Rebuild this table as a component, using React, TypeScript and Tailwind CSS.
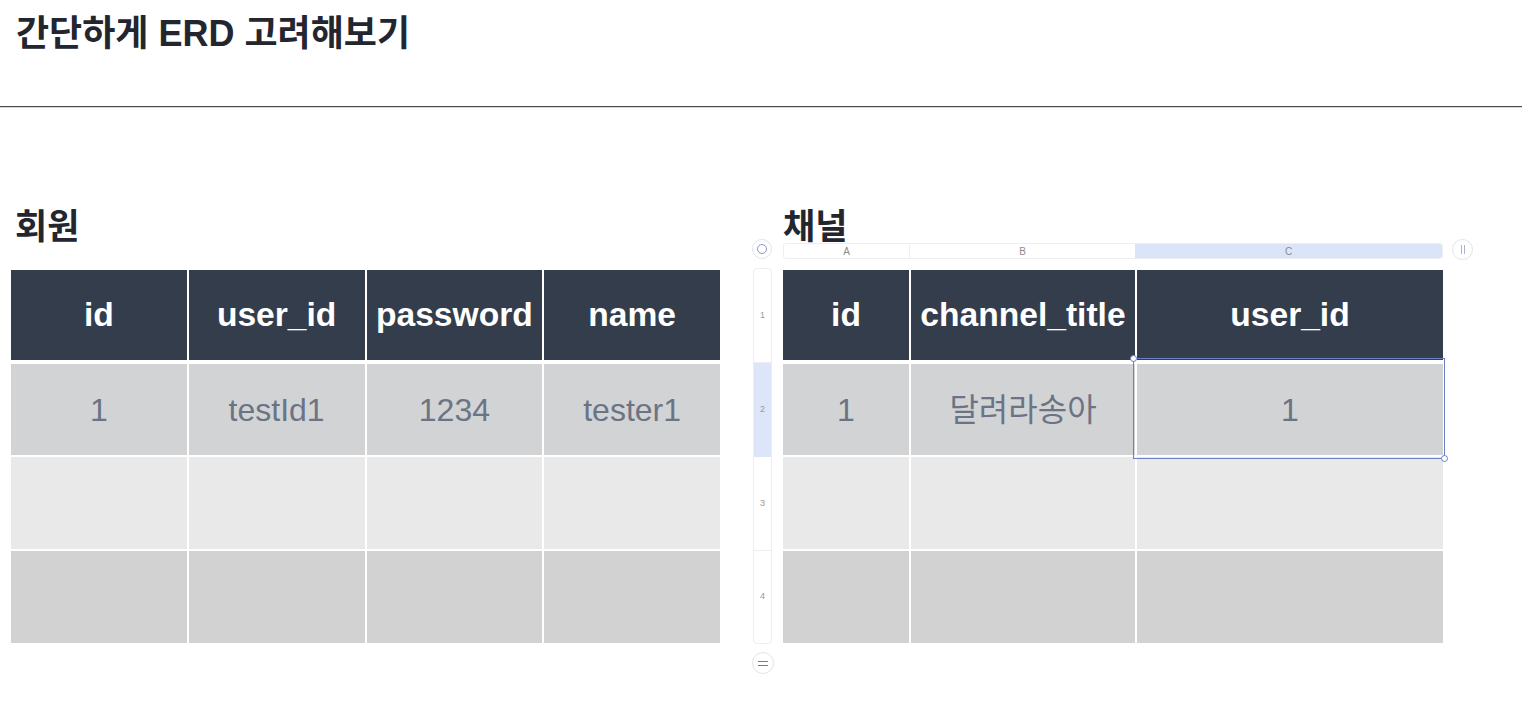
const header = 'bg-[#343d4c] text-white font-bold text-[33.6px] flex items-center justify-center h-[90px]'
const bodyText = 'text-[#6b7485] text-[32px]'

const memberCols = ['id', 'user_id', 'password', 'name']
const memberRow = ['1', 'testId1', '1234', 'tester1']
const channelCols = ['id', 'channel_title', 'user_id']
const channelRow = ['1', '달려라송아', '1']

const rows = [
  { bg: 'bg-[#d2d3d5]', gap: 'mt-[4px]', h: 'h-[91px]' },
  { bg: 'bg-[#e9e9e9]', gap: 'mt-[2px]', h: 'h-[92px]' },
  { bg: 'bg-[#d2d2d2]', gap: 'mt-[2px]', h: 'h-[92px]' },
]

function Table({ cols, row, grid }: { cols: string[]; row: string[]; grid: string }) {
  return (
    <div className="flex flex-col">
      <div className={`grid ${grid} gap-x-[2px]`}>
        {cols.map((c) => (
          <div key={c} className={header}>
            {c}
          </div>
        ))}
      </div>
      {rows.map((r, i) => (
        <div key={i} className={`grid ${grid} gap-x-[2px] ${r.gap}`}>
          {cols.map((c, j) => (
            <div key={c} className={`${r.bg} ${r.h} flex items-center justify-center ${bodyText}`}>
              {i === 0 ? row[j] : ''}
            </div>
          ))}
        </div>
      ))}
    </div>
  )
}

function Handle({ className }: { className: string }) {
  return <div className={`absolute w-[7px] h-[7px] rounded-full bg-white border border-[#6b80c4] ${className}`} />
}

export default function App() {
  return (
    <div
      className="w-[1522px] h-[714px] bg-white overflow-hidden"
      style={{ fontFamily: '"Liberation Sans", "Noto Sans CJK KR", sans-serif' }}
    >
      <div className="h-[106px] pl-[16px] pt-[12px]">
        <h1 className="text-[36px] font-bold text-[#23262e] leading-[44px]">간단하게 ERD 고려해보기</h1>
      </div>
      <div className="h-px bg-[#4a4a4a]" />
      <div className="h-px bg-[#d6d6d6]" />

      <div className="flex pt-[94px]">
        {/* 회원 */}
        <div className="ml-[11px] w-[709px] flex flex-col">
          <div className="h-[39px] pl-[4px] flex items-end">
            <h2 className="text-[35px] font-bold text-[#23262e] leading-none" style={{ fontFamily: '"Noto Sans CJK KR", sans-serif' }}>
              회원
            </h2>
          </div>
          <div className="h-[29px]" />
          <Table cols={memberCols} row={memberRow} grid="grid-cols-4" />
        </div>

        {/* 채널 with sheet chrome */}
        <div className="ml-[32px] flex">
          <div className="w-[31px] flex flex-col items-start">
            <div className="h-[39px]" />
            <div className="h-[29px] relative">
              <div className="absolute left-0 top-[-2px] w-[20px] h-[20px] rounded-full border border-[#e2e4ea] bg-white flex items-center justify-center">
                <div className="w-[10px] h-[10px] rounded-full border-[1.5px] border-[#8c96c8]" />
              </div>
            </div>
            <div className="w-[19px] h-[376px] ml-[1px] -mt-[2px] rounded-[4px] border border-[#eceef2] flex flex-col text-[9px] text-[#9a9a9a] overflow-hidden">
              <div className="h-[94px] flex items-center justify-center border-b border-[#eceef2]">1</div>
              <div className="h-[94px] flex items-center justify-center bg-[#dde6f8]">2</div>
              <div className="h-[94px] flex items-center justify-center border-b border-[#eceef2]">3</div>
              <div className="flex-1 flex items-center justify-center">4</div>
            </div>
            <div className="mt-[8px] w-[22px] h-[22px] rounded-full border border-[#e2e4ea] flex flex-col items-center justify-center gap-[3px]">
              <div className="w-[10px] h-px bg-[#6a78c4]" />
              <div className="w-[10px] h-px bg-[#6a78c4]" />
            </div>
          </div>

          <div className="w-[660px] flex flex-col">
            <div className="h-[39px] flex items-end">
              <h2 className="text-[35px] font-bold text-[#23262e] leading-none" style={{ fontFamily: '"Noto Sans CJK KR", sans-serif' }}>
                채널
              </h2>
            </div>
            <div className="h-[29px] relative">
              <div className="mt-[2px] h-[16px] rounded-[3px] border border-[#eceef2] grid grid-cols-[126px_225px_1fr] text-[10px] text-[#8a8a8a] overflow-hidden">
                <div className="flex items-center justify-center border-r border-[#eceef2]">A</div>
                <div className="flex items-center justify-center">B</div>
                <div className="flex items-center justify-center bg-[#dbe4f8]">C</div>
              </div>
              <div className="absolute left-[669px] top-[-2px] w-[21px] h-[21px] rounded-full border border-[#e2e4ea] flex items-center justify-center gap-[2px]">
                <div className="w-px h-[9px] bg-[#a7b0d6]" />
                <div className="w-px h-[9px] bg-[#a7b0d6]" />
              </div>
            </div>
            <div className="relative">
              <Table cols={channelCols} row={channelRow} grid="grid-cols-[126px_224px_306px]" />
              <div className="absolute left-[350px] top-[88px] w-[312px] h-[101px] border border-[#6b80c4]">
                <Handle className="-left-[4px] -top-[4px]" />
                <Handle className="-right-[4px] -bottom-[4px]" />
              </div>
            </div>
          </div>
        </div>
      </div>
    </div>
  )
}
